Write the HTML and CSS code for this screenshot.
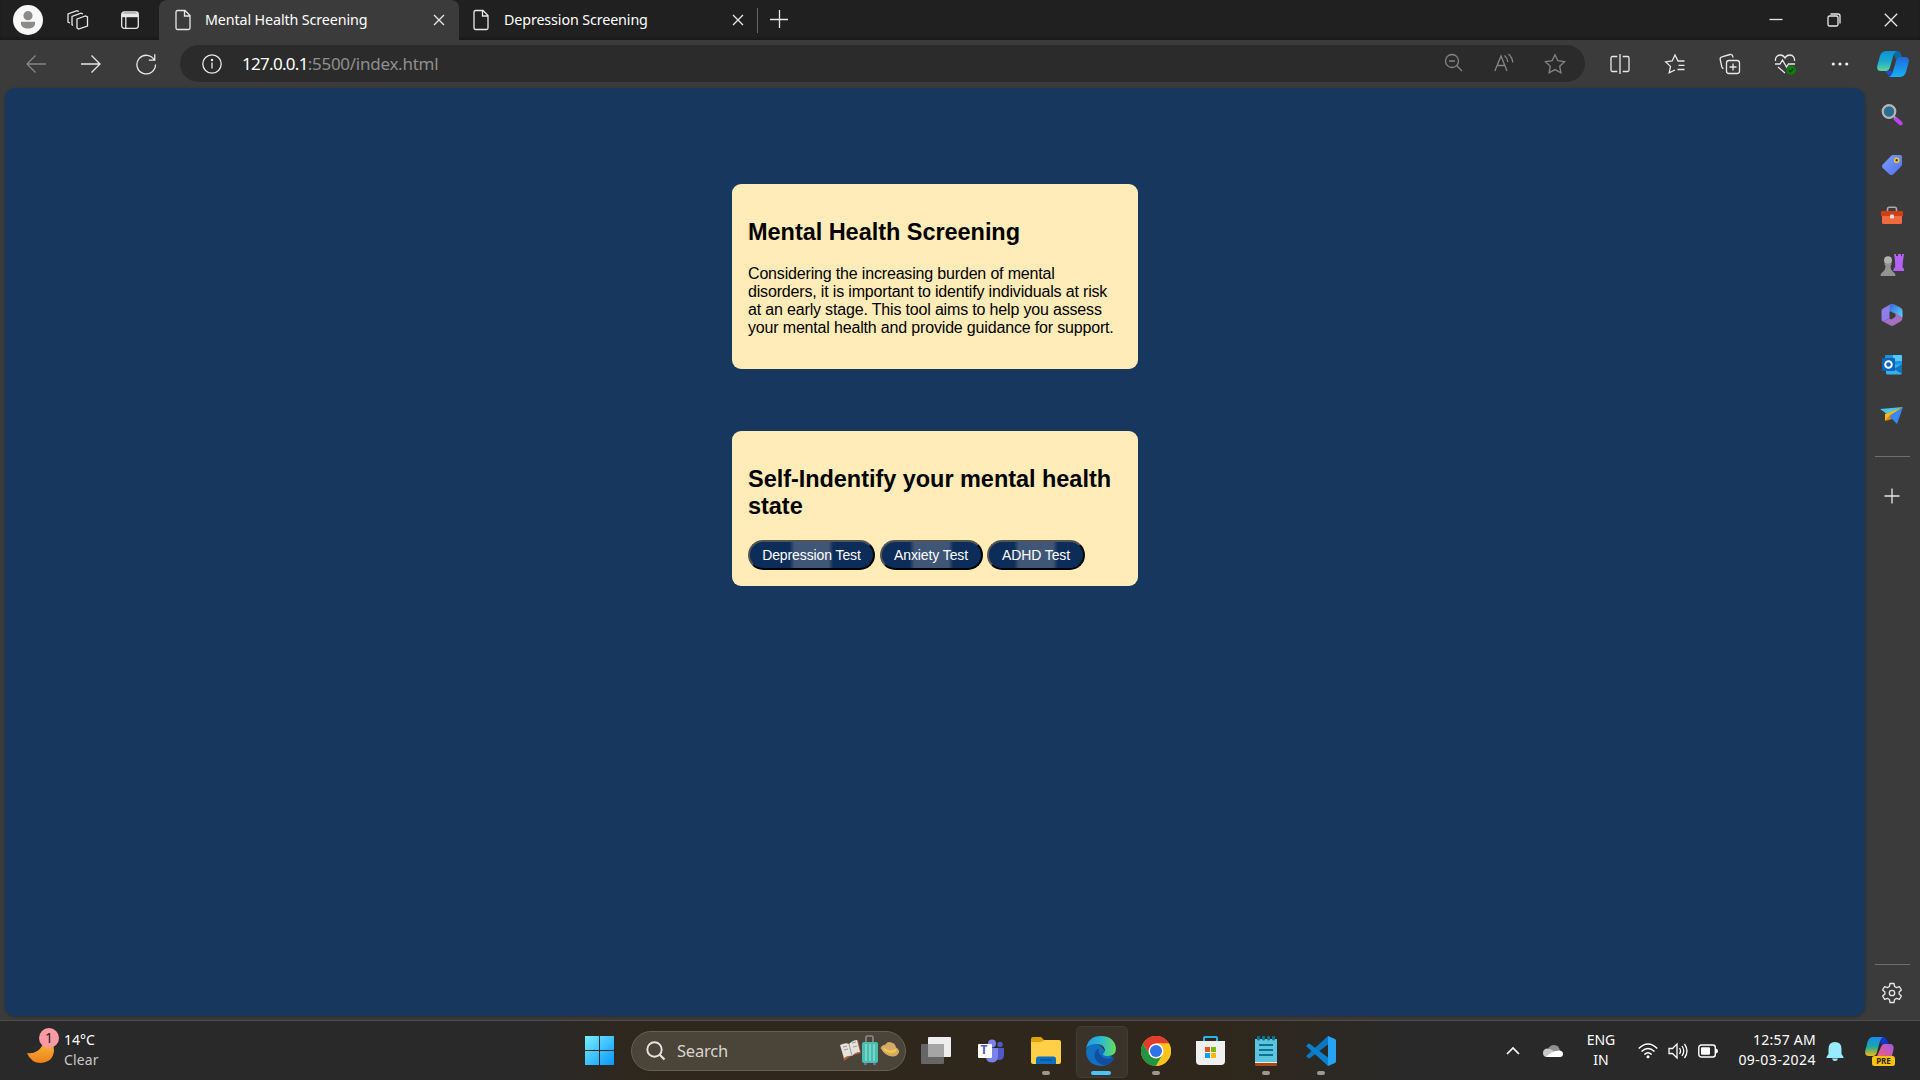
FILE: index.html
```html
<!DOCTYPE html>
<html lang="en">
<head>
<meta charset="utf-8">
<title>Mental Health Screening</title>
<link rel="stylesheet" href="styles.css">
</head>
<body>
<div class="desktop">
  <header class="tabstrip">
    <div class="strip-tools">
      <span class="avatar"><svg width="30" height="30" viewBox="0 0 30 30"><circle cx="15" cy="15" r="15" fill="#f8f8f8"/><circle cx="15" cy="10.7" r="4.6" fill="#8d8b89"/><path d="M8 16.800h14v1.700c0 3.300-3 5-7 5s-7-1.700-7-5z" fill="#8d8b89"/></svg></span>
      <span class="tool-slot"><svg width="22" height="22" viewBox="0 0 22 22" class="line"><path d="M10 10l8.500-3 2 1v9l-9 3-1.500-1zM10 10v9M6 16.500l-1-.8V7.500l9-3.300 2 .8M3 14l-2-1V5l9-3.300 2 .8"/></svg></span>
      <span class="tool-slot"><svg width="20" height="20" viewBox="0 0 20 20" class="line"><rect x="1.700" y="2" width="16.600" height="16.300" rx="2.500"/><path d="M2 5.200h16" stroke-width="4"/><path d="M5.800 6v12"/></svg></span>
    </div>
    <div class="tab tab-active">
      <svg width="16" height="22" viewBox="0 0 16 22" class="line"><path d="M2.500 1.500h7.500l5 5v12.500a1.500 1.500 0 0 1-1.500 1.500h-11a1.500 1.500 0 0 1-1.500-1.500v-16a1.500 1.500 0 0 1 1.500-1.500zM9.500 1.500v5.500h5.500"/></svg>
      <span class="tab-title">Mental Health Screening</span>
      <svg width="12" height="12" viewBox="0 0 12 12" class="line"><path d="M1 1l10 10M11 1L1 11"/></svg>
    </div>
    <div class="tab tab-second">
      <svg width="16" height="22" viewBox="0 0 16 22" class="line"><path d="M2.500 1.500h7.500l5 5v12.500a1.500 1.500 0 0 1-1.500 1.500h-11a1.500 1.500 0 0 1-1.500-1.500v-16a1.500 1.500 0 0 1 1.500-1.500zM9.500 1.500v5.500h5.500"/></svg>
      <span class="tab-title">Depression Screening</span>
      <svg width="12" height="12" viewBox="0 0 12 12" class="line"><path d="M1 1l10 10M11 1L1 11"/></svg>
    </div>
    <span class="tab-divider"></span>
    <span class="new-tab"><svg width="18" height="18" viewBox="0 0 18 18" class="line"><path d="M9.500 0v18M0 9.500h18"/></svg></span>
    <div class="window-controls">
      <span><svg width="14" height="14" viewBox="0 0 14 14" class="line"><path d="M.5 6.500h13"/></svg></span>
      <span><svg width="14" height="14" viewBox="0 0 14 14" class="line"><rect x="1" y="3" width="10" height="10" rx="1.500"/><path d="M3.500 1h7.500a2 2 0 0 1 2 2v7.500"/></svg></span>
      <span><svg width="14" height="14" viewBox="0 0 14 14" class="line"><path d="M.8.8l12.400 12.400M13.200.8L.8 13.200"/></svg></span>
    </div>
  </header>

  <nav class="toolbar">
    <span class="nav-slot dim"><svg width="20" height="18" viewBox="0 0 20 18" class="line"><path d="M20 9H1M9.500.5L1 9l8.500 8.500"/></svg></span>
    <span class="nav-slot"><svg width="20" height="18" viewBox="0 0 20 18" class="line"><path d="M0 9h19M10.500.5L19 9l-8.500 8.500"/></svg></span>
    <span class="nav-slot"><svg width="22" height="22" viewBox="0 0 22 22" class="line"><path d="M19.300 7A9.300 9.300 0 1 0 20.500 11.500M19.800 1.200v6h-6"/></svg></span>
    <div class="address">
      <svg width="20" height="20" viewBox="0 0 20 20" class="line"><circle cx="10" cy="10" r="9.200"/><path d="M10 8.500v6"/><circle cx="10" cy="5.900" r=".6" fill="#e6e6e6"/></svg>
      <span class="url"><b>127.0.0.1</b>:5500/index.html</span>
      <span class="address-icons dim">
        <svg width="20" height="20" viewBox="0 0 20 20" class="line"><circle cx="8" cy="8" r="6.500"/><path d="M12.800 12.800l5.200 5.200M5 8h6"/></svg>
        <svg width="22" height="20" viewBox="0 0 22 20" class="line"><path d="M1.800 18L8 3l6 15M4 12.500h8.200M11.500 2.500q3 2.500 3.300 6.500M15.500 1q3.800 3.500 4.300 8.500"/></svg>
        <svg width="22" height="22" viewBox="0 0 22 22" class="line"><path d="M11 1.700l2.900 6 6.600.9-4.800 4.600 1.200 6.600-5.900-3.200-5.900 3.200 1.200-6.600L1.500 8.600l6.600-.9z"/></svg>
      </span>
    </div>
    <div class="actions">
      <span><svg width="20" height="20" viewBox="0 0 20 20" class="line"><path d="M10 0v20M7.300 2.500H2.500A1.500 1.500 0 0 0 1 4v12a1.500 1.500 0 0 0 1.500 1.500h4.800M12.700 2.500h4.800A1.500 1.500 0 0 1 19 4v12a1.500 1.500 0 0 1-1.500 1.500h-4.800"/></svg></span>
      <span><svg width="22" height="22" viewBox="0 0 22 22" class="line"><path d="M20.500 8H14l-3-6-2.800 6-6.500.9 4.800 4.500-1.300 6.500L11 17M14.500 12.300h6M13.500 16.500h7"/></svg></span>
      <span><svg width="22" height="22" viewBox="0 0 22 22" class="line"><rect x="7.500" y="7.500" width="13" height="13" rx="2.500"/><path d="M14 10.500v7M10.500 14h7M4.500 15.500a2.200 2.200 0 0 1-1.700-1.700L1.200 6.500a2.200 2.200 0 0 1 1.700-2.700L11 1.500a2.200 2.200 0 0 1 2.700 1.700l.4 1.500"/></svg></span>
      <span><svg width="22" height="22" viewBox="0 0 22 22" class="line"><path d="M1.500 8C1 5 3 2 6 2c2 0 4 1 5 3 1-2 3-3 5-3 3 0 5 3 4.500 6M1 11h5l2.500-4 4 7 2-3h6.500M4 14l7 6"/><circle cx="17" cy="17.200" r="4.800" fill="#107c10" stroke="none"/><path d="M14.900 17.300l1.500 1.500 2.700-3" stroke="#063e06"/></svg></span>
      <span><svg width="18" height="6" viewBox="0 0 18 6" fill="#f0f0f0"><circle cx="2.300" cy="3" r="1.600"/><circle cx="9" cy="3" r="1.600"/><circle cx="15.700" cy="3" r="1.600"/></svg></span>
      <span class="copilot"><svg width="32" height="28" viewBox="0 0 32 28">
        <defs><linearGradient id="cpA" x1="0" y1="0" x2="0" y2="1"><stop offset="0" stop-color="#0c8fd8"/><stop offset=".5" stop-color="#18a9cf"/><stop offset="1" stop-color="#5fd897"/></linearGradient><linearGradient id="cpB" x1="0" y1="0" x2="0" y2="1"><stop offset="0" stop-color="#2168da"/><stop offset="1" stop-color="#16b2f5"/></linearGradient></defs>
        <path d="M16 1h4q3 0 4 3l1.500 5h-7z" fill="#0b6aa5"/><path d="M8 21h6.500l4 6h-4q-3 0-4-3z" fill="#2148dc"/>
        <path d="M9.500 1H20q-2.500 1-3.500 4L13 17q-1 4-4 4H4q-5 0-3.500-6l2.500-9q1.500-5 6.500-5z" fill="url(#cpA)"/>
        <path d="M22.500 27H12q2.500-1 3.500-4L19 11q1-4 4-4h5q5 0 3.500 6l-2.500 9q-1.500 5-6.500 5z" fill="url(#cpB)"/></svg></span>
    </div>
  </nav>

  <div class="workspace">
    <main class="page">
      <section class="card intro">
        <h2>Mental Health Screening</h2>
        <p>Considering the increasing burden of mental<br>disorders, it is important to identify individuals at risk<br>at an early stage. This tool aims to help you assess<br>your mental health and provide guidance for support.</p>
      </section>
      <section class="card tests">
        <h2>Self-Indentify your mental health<br>state</h2>
        <div class="buttons">
          <button class="b1">Depression Test</button>
          <button class="b2">Anxiety Test</button>
          <button class="b3">ADHD Test</button>
        </div>
      </section>
    </main>
    <aside class="sidebar">
      <span><svg width="22" height="22" viewBox="0 0 22 22"><path d="M14.800 15l4.700 4.300" stroke="#bd42f4" stroke-width="4.200" stroke-linecap="round"/><path d="M12.500 12l2 2" stroke="#999" stroke-width="2"/><circle cx="8" cy="7.500" r="6.300" fill="#2b6c91" stroke="#b9b7b5" stroke-width="2.200"/></svg></span>
      <span><svg width="22" height="22" viewBox="0 0 22 22"><defs><linearGradient id="tag" x1="0" y1="0" x2="1" y2="1"><stop offset="0" stop-color="#7ba3ff"/><stop offset="1" stop-color="#536bf0"/></linearGradient></defs><path d="M12 1h7q2 0 2 2v7.500q0 1-1 2l-7.500 7.700q-2 1.800-4 0l-6.500-6q-2-2 0-4L10 2q1-1 2-1z" fill="url(#tag)"/><circle cx="15.700" cy="6.300" r="2" fill="#334" stroke="#f1c928" stroke-width="1.600"/></svg></span>
      <span><svg width="24" height="20" viewBox="0 0 24 20"><path d="M7.500 6V4q0-1.800 1.800-1.800h5.400q1.800 0 1.800 1.800v2" fill="none" stroke="#aaa" stroke-width="1.600"/><path d="M2 9h20v8.500q0 1.500-1.500 1.500h-17Q2 19 2 17.500z" fill="#f16a3e"/><path d="M2 6h20q1 0 1 1v4H1V7q0-1 1-1z" fill="#cf3f17"/><rect x="10" y="9.500" width="4" height="4" rx="1.300" fill="#ddd"/></svg></span>
      <span><svg width="24" height="24" viewBox="0 0 24 24"><path d="M14 1h2v2h2V1h3v2h1V1h2l-1 7-.5 6 1.500 2v2H13.500v-2l1.700-2-.2-6z" fill="#b561f4"/><circle cx="8" cy="7.300" r="4" fill="#b3b1af"/><path d="M4 10.500h8l-1.500 2.500q0 4 3.500 6.500 1.500 1 1.500 3.500h-15q0-2.500 1.500-3.500 3.500-2.500 3.500-6.500z" fill="#959391"/></svg></span>
      <span><svg width="22" height="24" viewBox="0 0 22 24"><defs><linearGradient id="m3" x1="0" y1="0" x2="1" y2="1"><stop offset="0" stop-color="#3a62d8"/><stop offset="1" stop-color="#5bd8fb"/></linearGradient></defs><path d="M10 1L2 5.500Q.5 6.500.5 8v8q0 2 1.500 2.500l6.500-3V9L11 6z" fill="#8f7de8"/><path d="M9 1.300q2-1 4 0L20 5q1.500 1 1.500 3v6.500L14 10.500 8.500 8z" fill="url(#m3)"/><path d="M21.500 14.500q0 2.500-2 4l-7 4q-1.500.8-3 0L2 18.500l6.500-3 2 1 4-3V10.500z" fill="#a56fc4"/></svg></span>
      <span><svg width="22" height="22" viewBox="0 0 22 22"><rect x="4" y="1" width="17" height="14" rx="1.300" fill="#1f94dc"/><path d="M12 1h8q1 0 1 1v5h-9z" fill="#52c8f8"/><path d="M5 12l16-2v9q0 1.500-1.500 1.500h-13Q5 20.500 5 19z" fill="#35b1ee"/><path d="M21 10v10l-8-5z" fill="#1273b7"/><rect x="1" y="4" width="13" height="13" rx="1.300" fill="#0a63bd"/><circle cx="7.500" cy="10.500" r="3.300" fill="none" stroke="#fff" stroke-width="2"/></svg></span>
      <span><svg width="24" height="20" viewBox="0 0 24 20"><path d="M0 4l23-2L7 9z" fill="#42c6ee"/><path d="M23 2L5 9v7l4-3z" fill="#fbb512"/><path d="M23 2L9 11l8 8z" fill="#3789f1"/><path d="M5 16l4-5 3 3z" fill="#df8c00"/></svg></span>
      <i class="rule"></i>
      <span class="add"><svg width="16" height="16" viewBox="0 0 16 16" class="line"><path d="M8 .5v15M.5 8h15"/></svg></span>
      <i class="rule rule-bottom"></i>
      <span class="gear"><svg width="22" height="22" viewBox="0 0 22 22" class="line"><circle cx="11" cy="11" r="2.700"/><path d="M9 1.500h4l.6 3 1.900 1.100 2.900-1 2 3.400-2.300 2v2l2.300 2-2 3.400-2.900-1-1.900 1.100-.6 3H9l-.6-3-1.900-1.100-2.900 1-2-3.400 2.300-2v-2L1.600 8l2-3.400 2.900 1 1.900-1.100z" stroke-linejoin="round"/></svg></span>
    </aside>
  </div>

  <footer class="taskbar">
    <div class="weather">
      <span class="moon"><svg width="34" height="38" viewBox="0 0 34 38"><defs><linearGradient id="moon" x1="0" y1="0" x2="0" y2="1"><stop offset="0" stop-color="#f5c242"/><stop offset="1" stop-color="#f0801b"/></linearGradient></defs><path d="M1 26q10 1.500 15-7 3-5 2-8 10 4 10 12.500Q27 35 15 36 5 36 1 26z" fill="url(#moon)"/><circle cx="23" cy="11" r="10" fill="#ff99a4"/></svg><em>1</em></span>
      <span class="temp"><span>14°C</span><small>Clear</small></span>
    </div>
    <div class="apps">
      <span class="app start"><svg width="29" height="29" viewBox="0 0 29 29"><defs><linearGradient id="win" gradientUnits="userSpaceOnUse" x1="0" y1="0" x2="29" y2="29"><stop offset="0" stop-color="#75eeff"/><stop offset="1" stop-color="#0896ff"/></linearGradient></defs><path d="M0 0h14v14H0zM15 0h14v14H15zM0 15h14v14H0zM15 15h14v14H15z" fill="url(#win)"/></svg></span>
      <div class="search">
        <svg width="20" height="20" viewBox="0 0 20 20"><circle cx="8.500" cy="8.500" r="7.200" fill="none" stroke="#e6e4e2" stroke-width="1.900"/><path d="M13.500 13.500l5 5" stroke="#e6e4e2" stroke-width="2.200"/></svg>
        <span>Search</span>
        <svg width="60" height="32" viewBox="0 0 60 32"><path d="M1 12l9-3 8-4 3 13-10 3-7 5z" fill="#a85d3e"/><path d="M0 10q6-3 9-1 4-4 8-4l3 12q-5 0-8 4-4-1-8 2z" fill="#e5e1dc"/><path d="M9 9l3 12M3 12l4-1M4 15l4-1M12 8l4-1M13 12l4-1" stroke="#999" fill="none"/><path d="M26 8V2.500Q26 1 27.500 1h4Q33 1 33 2.500V8" fill="none" stroke="#8d8b89" stroke-width="1.600"/><rect x="22" y="7" width="16" height="21" rx="2" fill="#49bdb0"/><path d="M26 9v17M30 9v17M34 9v17" stroke="#8fe0d5" stroke-width="1.300"/><path d="M24 28h3v2h-3zM33 28h3v2h-3z" fill="#666b9c"/><path d="M40.500 13q1-3 5-3.500 2-3.500 6-2 4 1 4.500 5 3.500 2 3 5-2 4.500-7 4-7-.5-11.500-8.500z" fill="#d6a967"/><path d="M44 12q5 6 12 1.500l.5 3q-7 4-13-1.500z" fill="#f2c94b"/></svg>
      </div>
      <span class="app"><svg width="30" height="27" viewBox="0 0 30 27"><rect x="7" y="0" width="23" height="20" rx="1" fill="#eee"/><rect x="0" y="7" width="23" height="20" rx="1" fill="#666"/><rect x="7" y="7" width="16" height="13" fill="#a5a5a5"/></svg></span>
      <span class="app"><svg width="28" height="24" viewBox="0 0 28 24"><circle cx="23" cy="5.500" r="2.700" fill="#5059c9"/><circle cx="15" cy="4.500" r="4" fill="#7b83eb"/><path d="M16 9h11v7q0 5-5 5-3 0-4-2z" fill="#5059c9"/><path d="M9 9h12v8q0 6-6 6.500Q9 23 9 18z" fill="#7b83eb"/><rect x="1" y="5" width="14" height="14" rx="1" fill="#fff"/></svg><b class="teams-t">T</b></span>
      <span class="app open"><svg width="30" height="28" viewBox="0 0 30 28"><path d="M0 2q0-2 2-2h8l3 3-3 4H0z" fill="#e1a20a"/><path d="M0 5h10l3-2h15q2 0 2 2v20q0 2-2 2H2q-2 0-2-2z" fill="#ffcf48"/><path d="M5 27v-5q0-2.500 2.500-2.500h15Q25 19.500 25 22v5z" fill="#0c6fc4"/><path d="M9 23h12" stroke="#064d8c"/></svg></span>
      <span class="app open active"><svg width="30" height="30" viewBox="0 0 30 30"><defs><linearGradient id="ed1" x1="0" y1="0" x2="1" y2="0"><stop offset="0" stop-color="#1e9ee0"/><stop offset=".5" stop-color="#2ab9d5"/><stop offset="1" stop-color="#67e05a"/></linearGradient></defs><path d="M0 14q0 13 11.500 15.600Q23 31.500 28 22l-6-3-7-9L6 6z" fill="#1170c0"/><path d="M0 13Q2 0 15 0q13 0 15 12 0 8-8 8-5 0-5-2 2-1.500 2-4-1-6-9-6Q3 8 0 13z" fill="url(#ed1)"/><path d="M12.500 12q-6 5-3 11 4 7 11 6 5-1.500 7.500-6 .5-2-1-1.500-5 2.500-10.500-.5-4.500-3-4-9z" fill="#104f9f"/></svg></span>
      <span class="app open"><svg width="30" height="30" viewBox="0 0 30 30"><circle cx="15" cy="15" r="15" fill="#fcc31e"/><path d="M2 7.500A15 15 0 0 1 28 7.500H15L8.500 18.700z" fill="#e33b2e"/><path d="M2 7.500l6.500 11.300h13L15 30A15 15 0 0 1 2 7.500z" fill="#229342"/><path d="M15 7.500h13A15 15 0 0 1 15 30l6.500-11.200z" fill="#fcc31e"/><circle cx="15" cy="15" r="7.500" fill="#fff"/><circle cx="15" cy="15" r="6" fill="#2c74e8"/></svg></span>
      <span class="app"><svg width="29" height="30" viewBox="0 0 29 30"><path d="M8 7V2q0-1 1-1h11q1 0 1 1v5" fill="none" stroke="#2ab4ec" stroke-width="2"/><path d="M0 5h29v20q0 4-4 4H4q-4 0-4-4z" fill="#f0f0f0"/><path d="M9 11h5v5H9z" fill="#f25022"/><path d="M15 11h5v5h-5z" fill="#7fba00"/><path d="M9 17h5v5H9z" fill="#00a4ef"/><path d="M15 17h5v5h-5z" fill="#ffb900"/></svg></span>
      <span class="app open"><svg width="22" height="30" viewBox="0 0 22 30"><rect y="25" width="22" height="5" rx="1" fill="#a44a12"/><rect y="24" width="22" height="3" fill="#eee"/><path d="M0 3h22v23H0z" fill="#5cc5de"/><path d="M4 9h14M4 14h14M4 19h14" stroke="#0d7295" stroke-width="1.800"/><path d="M3.500 1v2M8.500 1v2M13.500 1v2M18.500 1v2" stroke="#0d7295" stroke-width="3" stroke-linecap="round"/></svg></span>
      <span class="app open"><svg width="30" height="30" viewBox="0 0 30 30"><path d="M0 20l2 2q1 .8 2 0L22 8.500V0z" fill="#0a76c4"/><path d="M0 10l2-2q1-.8 2 0l18 13.500V30z" fill="#0b80cc"/><path d="M22 0l7 3q1 .5 1 2v20q0 1.500-1 2l-7 3z" fill="#26a3f1"/></svg></span>
    </div>
    <div class="tray">
      <span class="chev"><svg width="14" height="9" viewBox="0 0 14 9"><path d="M1 8l6-6 6 6" fill="none" stroke="#fff" stroke-width="1.600"/></svg></span>
      <span class="cloud"><svg width="22" height="14" viewBox="0 0 22 14"><path d="M6 5q2-4 6-4 5 0 6 6l-10 4z" fill="#8f8f8f"/><path d="M5 13Q1 13 1 9q0-4 4-4.500 4 0 7 3L8 13z" fill="#c8c8c8"/><path d="M4 13q2-2.500 5-4 3-2.500 8-2.500 4 0 4 3.500 0 3-3 3z" fill="#fff"/></svg></span>
      <span class="lang"><span>ENG</span><span>IN</span></span>
      <span class="status">
        <svg width="20" height="16" viewBox="0 0 20 16" fill="none" stroke="#fff" stroke-width="1.400"><path d="M.7 5.500q9.300-9 18.600 0M3.500 8.500q6.500-6.200 13 0M6.300 11.400q3.700-3.500 7.400 0"/><circle cx="10" cy="13.700" r="1.500" fill="#fff" stroke="none"/></svg>
        <svg width="20" height="18" viewBox="0 0 20 18" fill="none" stroke="#fff" stroke-width="1.300"><path d="M1 6.500h3.500L9 2v14l-4.500-4.500H1zM11.500 6q2 3 0 6M14 4q3.500 5 0 10M16.500 2q5 7 0 14"/></svg>
        <svg width="20" height="14" viewBox="0 0 20 14"><rect x=".8" y="1" width="16.500" height="12" rx="2.500" fill="none" stroke="#fff" stroke-width="1.400"/><rect x="3" y="3.200" width="9" height="7.600" rx="1" fill="#fff"/><path d="M18 4.500q2 .5 2 2.500t-2 2.500z" fill="#fff"/></svg>
      </span>
      <span class="clock"><span>12:57 AM</span><span class="date">09-03-2024</span></span>
      <span class="bell"><svg width="18" height="20" viewBox="0 0 18 20" fill="#99ebff"><path d="M9 1q6.500 0 6.500 7v5l2 3v1H.5v-1l2-3V8Q2.500 1 9 1zM6 17.500h6Q11.500 20 9 20t-3-2.500z"/></svg></span>
      <span class="pilot"><svg width="30" height="30" viewBox="0 0 30 30"><defs><linearGradient id="pa" x1="0" y1="0" x2="0" y2="1"><stop offset="0" stop-color="#1b8af0"/><stop offset=".5" stop-color="#1aa7a5"/><stop offset="1" stop-color="#eebd10"/></linearGradient><linearGradient id="pb" x1="1" y1="0" x2="0" y2="1"><stop offset="0" stop-color="#9b59f2"/><stop offset="1" stop-color="#f65f6b"/></linearGradient></defs><path d="M14 1h4q3 0 4 3l1 4h-7z" fill="#1236c9"/><path d="M8.500 1H18q-2 1-3 4l-3 11q-1 4-4 4H4q-5 0-3.500-6l2-8Q4 1 8.500 1z" fill="url(#pa)"/><path d="M19 8h5.500q5 0 4 5.500L27 20H12l4-9q1-3 3-3z" fill="url(#pb)"/><rect x="7" y="20" width="23" height="10" rx="2.500" fill="#ffc20e"/></svg><em>PRE</em></span>
    </div>
  </footer>
</div>
</body>
</html>
```
FILE: styles.css
```css
* { box-sizing: border-box; }
body { margin: 0; background: #3b3b3b; font-family: "Noto Sans", "Open Sans", sans-serif; color: #fff; }
svg { display: block; flex: none; }
.line { fill: none; stroke: #e8e8e8; stroke-width: 1.3; }
.dim .line { stroke: #858585; }
.desktop { display: flex; flex-direction: column; width: 1920px; height: 1080px; overflow: hidden; }

.tabstrip { display: flex; height: 40px; background: #202020; box-shadow: inset 0 -2px 2px #1a1a1a; }
.strip-tools { display: flex; align-items: center; width: 159px; padding-left: 13px; }
.avatar { width: 39px; }
.tool-slot { display: flex; justify-content: center; width: 52px; }
.tab { display: flex; align-items: center; width: 298px; padding: 0 13px 0 14px; gap: 15px; }
.tab-active { width: 300px; gap: 14px; padding-left: 16px; padding-right: 14px; background: #3b3b3b; border-radius: 8px 8px 0 0; }
.tab-title { flex: 1; padding-bottom: 2px; font-size: 14.3px; letter-spacing: -.12px; white-space: nowrap; }
.tab-divider { width: 1px; height: 25px; margin-top: 8px; background: #666; }
.new-tab { padding: 10px 0 0 12px; }
.window-controls { display: flex; margin-left: auto; align-items: center; }
.window-controls span { display: flex; justify-content: center; width: 57.5px; }

.toolbar { display: flex; align-items: center; height: 48px; padding: 0 0 1px 8px; background: #3b3b3b; }
.nav-slot { display: flex; flex: none; justify-content: center; width: 55px; }
.address { display: flex; flex: none; align-items: center; width: 1405px; height: 37px; margin: 0 7px; padding: 0 19px 0 22px; border-radius: 19px; background: #2b2b2b; }
.url { margin-left: 20px; font-size: 17px; letter-spacing: -.27px; color: #8f8f8f; white-space: nowrap; }
.url b { font-weight: 400; letter-spacing: -.7px; color: #fff; }
.address-icons { display: flex; gap: 29px; margin-left: auto; }
.actions { display: flex; flex: none; align-items: center; }
.actions span { display: flex; justify-content: center; width: 55px; }
.actions .copilot { width: 52px; }

.workspace { display: flex; height: 932px; padding-left: 5px; background: #3b3b3b; }
.page { display: flex; flex-direction: column; align-items: center; width: 1860px; height: 928px; padding-top: 96px; background: #18375f; border-radius: 10px; box-shadow: 0 1px 3px #2d2d2d; font-family: "Liberation Sans", Arial, sans-serif; color: #000; }
.card { width: 406px; padding: 0 16px; background: #ffecb9; border-radius: 9px; }
.card h2 { margin: 0; font-size: 23.5px; line-height: 27px; letter-spacing: -.04px; white-space: nowrap; }
.card p { margin: 19px 0 0; font-size: 16px; line-height: 18px; letter-spacing: -.17px; white-space: nowrap; }
.intro { height: 185px; padding-top: 35px; }
.tests { height: 155px; margin-top: 62px; padding-top: 35px; }
.buttons { display: flex; gap: 4.5px; margin-top: 20px; }
.buttons button { height: 30px; padding: 0; border: 2px outset #000; border-radius: 15px; color: #fff; font: 14px "Liberation Sans", Arial, sans-serif; letter-spacing: -.1px; background: linear-gradient(90deg, transparent calc(50% - 22px), #405677 calc(50% - 17px), #405677 calc(50% + 17px), transparent calc(50% + 22px)) border-box, #0c2c5a; }
.buttons .b1 { width: 127px; }
.buttons .b2 { width: 103px; }
.buttons .b3 { width: 98px; }

.sidebar { display: flex; flex-direction: column; align-items: center; width: 54px; padding-top: 2px; }
.sidebar span { display: flex; align-items: center; justify-content: center; height: 50px; }
.rule { width: 35px; height: 1px; margin-top: 16px; background: #6e6e6e; }
.sidebar .add { margin-top: 14px; }
.rule-bottom { margin-top: auto; }
.sidebar .gear { height: 55px; }

.taskbar { display: flex; height: 60px; border-top: 1px solid #4f4d4b; background: linear-gradient(90deg, #292929 540px, #2f271b 650px, #2f271b 1230px, #292929 1400px); }
.weather { display: flex; width: 572px; padding: 6px 0 0 26px; }
.moon { position: relative; width: 38px; }
.moon em { position: absolute; left: 19px; top: 1px; font-style: normal; font-size: 14px; line-height: 20px; color: #222; }
.temp { display: flex; flex-direction: column; font-size: 14px; line-height: 19.5px; padding-top: 3px; }
.temp small { font-size: 14px; letter-spacing: .15px; color: #c8c8c8; }
.apps { display: flex; align-items: center; }
.app { position: relative; display: flex; align-items: center; justify-content: center; width: 55px; height: 58px; }
.open::after { content: ""; position: absolute; bottom: 5px; left: 23.5px; width: 8px; height: 4px; border-radius: 2px; background: #9b9792; }
.active::before { content: ""; position: absolute; left: 3px; top: 4px; width: 50px; height: 50px; border: 1px solid #443d34; border-radius: 5px; background: #3a332a; }
.active svg { position: relative; }
.active::after { left: 17.5px; width: 20px; background: #4cc2ff; }
.teams-t { position: absolute; left: 14px; top: 18px; width: 14px; text-align: center; font: bold 12px/20px "Noto Sans", sans-serif; color: #5059c9; }
.search { display: flex; align-items: center; width: 275px; height: 40px; margin: 0 2px 0 4px; padding: 0 5px 0 14px; border: 1px solid #655f55; border-radius: 20px; background: #4b4439; color: #d8d5d0; font-size: 16.5px; letter-spacing: -.2px; }
.search span { flex: 1; padding-left: 11px; }
.tray { display: flex; align-items: center; width: 440px; margin-left: auto; font-size: 14px; line-height: 20px; }
.chev { padding-left: 26px; width: 62px; }
.cloud { width: 44px; }
.lang { display: flex; flex-direction: column; align-items: center; width: 30px; padding-bottom: 1px; }
.status { display: flex; align-items: center; gap: 10px; margin-left: 22px; }
.clock { display: flex; flex-direction: column; align-items: flex-end; margin-left: auto; padding-bottom: 2px; letter-spacing: .25px; }
.date { letter-spacing: .45px; }
.bell { margin: 0 0 0 10px; }
.pilot { position: relative; margin: 0 25px 0 21px; }
.pilot em { position: absolute; left: 7px; top: 20px; width: 23px; text-align: center; font: bold 8px/10px "Noto Sans", sans-serif; color: #222; }
```
